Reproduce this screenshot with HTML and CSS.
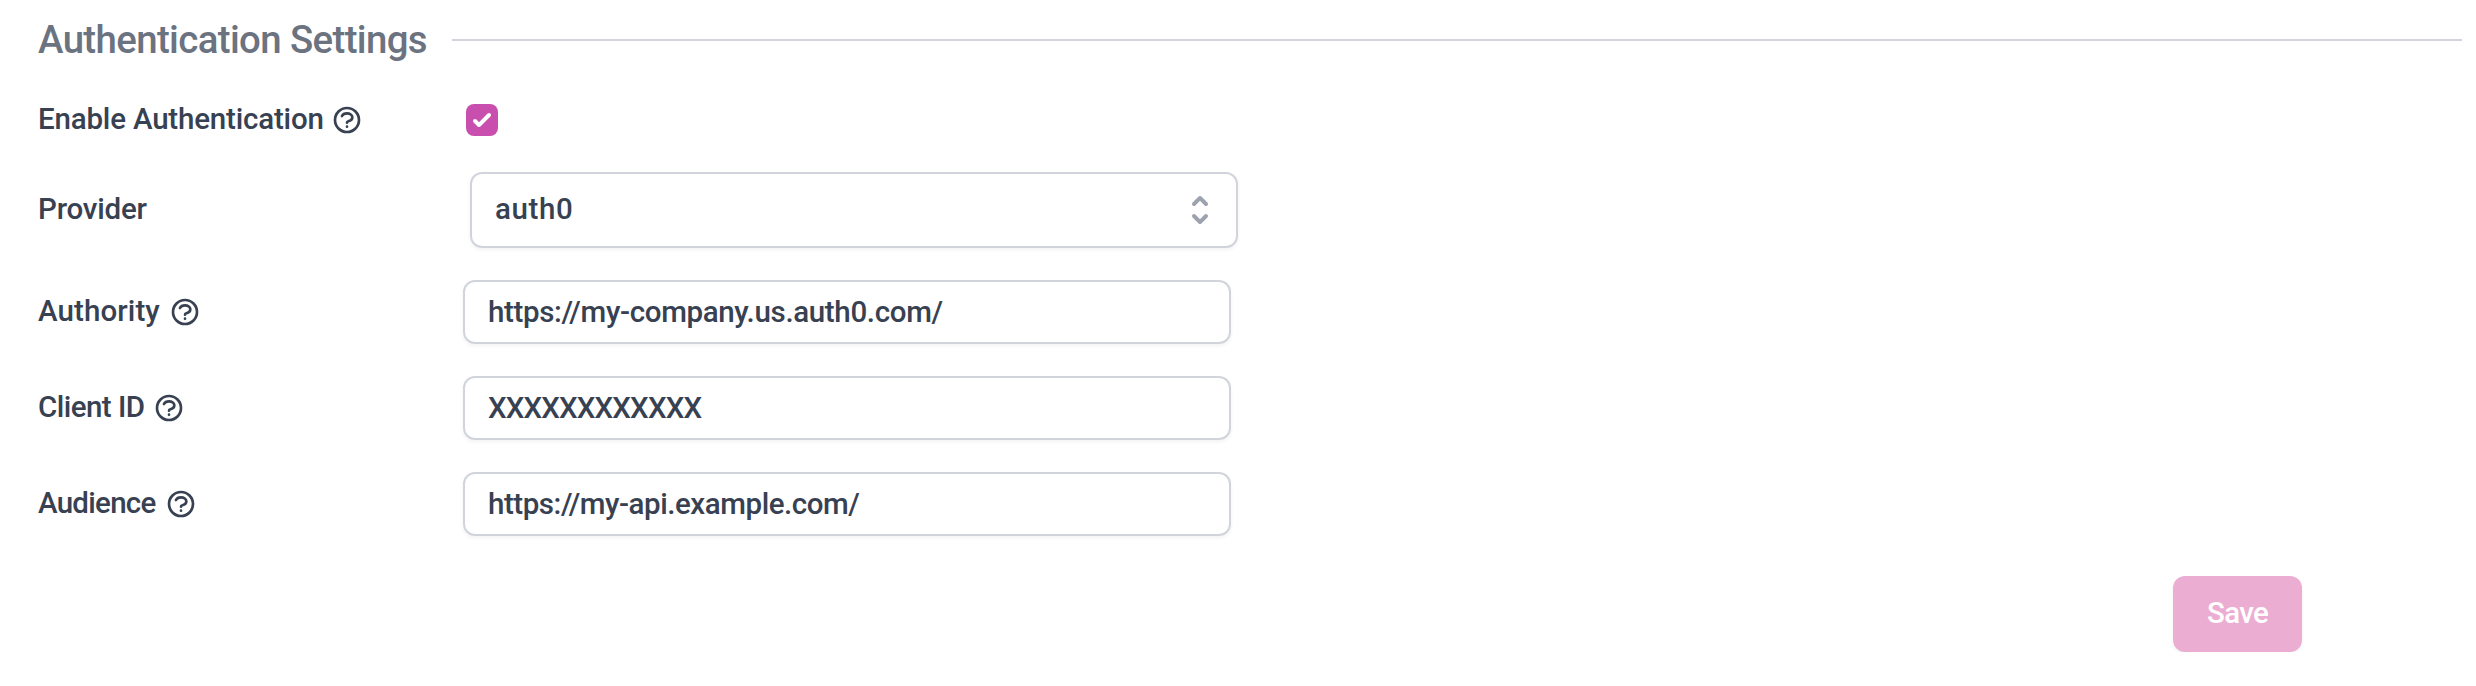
FILE: index.html
```
<!DOCTYPE html>
<html lang="en">
<head>
<meta charset="utf-8">
<title>Authentication Settings</title>
<link rel="stylesheet" href="styles.css">
</head>
<body>
<svg class="defs" aria-hidden="true">
  <symbol id="help" viewBox="0 0 24 24"><path fill="none" stroke="currentColor" stroke-width="2" stroke-linecap="round" stroke-linejoin="round" d="M8.228 9c.549-1.165 2.03-2 3.772-2 2.21 0 4 1.343 4 3 0 1.4-1.278 2.575-3.006 2.907-.542.104-.994.54-.994 1.093m0 3h.01M21 12a9 9 0 11-18 0 9 9 0 0118 0z"/></symbol>
</svg>
<form class="settings">
  <header class="heading"><h1 class="title">Authentication Settings</h1><div class="rule"></div></header>

  <div class="row row-check">
    <div class="label"><span class="text t-enable">Enable Authentication</span><svg class="help"><use href="#help"/></svg></div>
    <div class="checkbox" role="checkbox" aria-checked="true"><svg class="check" viewBox="0 0 16 16"><path fill="#fff" d="M12.207 4.793a1 1 0 010 1.414l-5 5a1 1 0 01-1.414 0l-2-2a1 1 0 011.414-1.414L6.5 9.086l4.293-4.293a1 1 0 011.414 0z"/></svg></div>
  </div>

  <div class="row row-select">
    <div class="label"><span class="text t-provider">Provider</span></div>
    <div class="field select"><span class="text t-auth0">auth0</span><svg class="selector" viewBox="0 0 20 20"><path fill="currentColor" d="M10 3a1 1 0 01.707.293l3 3a1 1 0 01-1.414 1.414L10 5.414 7.707 7.707a1 1 0 01-1.414-1.414l3-3A1 1 0 0110 3zm-3.707 9.293a1 1 0 011.414 0L10 14.586l2.293-2.293a1 1 0 011.414 1.414l-3 3a1 1 0 01-1.414 0l-3-3a1 1 0 010-1.414z"/></svg></div>
  </div>

  <div class="row">
    <div class="label"><span class="text t-authority">Authority</span><svg class="help"><use href="#help"/></svg></div>
    <div class="field input"><span class="t-company">https://my-company.us.auth0.com/</span></div>
  </div>

  <div class="row">
    <div class="label"><span class="text t-client">Client ID</span><svg class="help"><use href="#help"/></svg></div>
    <div class="field input"><span class="t-x">XXXXXXXXXXXX</span></div>
  </div>

  <div class="row">
    <div class="label"><span class="text t-audience">Audience</span><svg class="help"><use href="#help"/></svg></div>
    <div class="field input"><span class="t-api">https://my-api.example.com/</span></div>
  </div>

  <footer class="actions"><button class="save" type="button"><span class="text t-save">Save</span></button></footer>
</form>
</body>
</html>
```
FILE: styles.css
```
* { box-sizing: border-box; }
body {
  margin: 0;
  background: #fff;
  color: #374151;
  font: 500 29.5px/40px Roboto, "Liberation Sans", sans-serif;
}
.defs { position: absolute; width: 0; height: 0; }
.settings { display: flex; flex-direction: column; padding: 0 14px 0 38px; }

.heading { display: flex; align-items: center; height: 80px; margin-bottom: 24px; }
.title {
  width: 414px;
  margin: 0;
  padding-bottom: 1px;
  color: #6b7280;
  font-size: 38.4px;
  font-weight: 500;
  letter-spacing: -0.62px;
  white-space: nowrap;
}
.rule { flex: 1; height: 2px; background: #d1d5db; }

.row {
  display: grid;
  grid-template-columns: 425px 768px;
  grid-template-rows: 100%;
  align-items: center;
  height: 64px;
  margin-bottom: 32px;
}
.row-check { height: 32px; margin-bottom: 36px; }
.row-select { height: 76px; }
.label { display: flex; align-items: center; gap: 9px; white-space: nowrap; }
.text { padding-bottom: 2px; }
.help { width: 32px; height: 32px; flex: none; }

.field {
  display: flex;
  align-items: center;
  height: 64px;
  border: 2px solid #d1d5db;
  border-radius: 12px;
  background: #fff;
  box-shadow: 0 2px 4px rgba(0, 0, 0, 0.05);
  white-space: nowrap;
}
.input { padding-left: 23px; }
.select {
  justify-content: space-between;
  height: 76px;
  margin-left: 7px;
  margin-right: -7px;
  padding: 0 16px 0 23px;
}
.selector { width: 40px; height: 40px; color: #9ca3af; }

.checkbox {
  display: flex;
  width: 32px;
  height: 32px;
  margin-left: 3px;
  border-radius: 8px;
  background: #c84fae;
}
.check { width: 32px; height: 32px; }

.actions { display: flex; justify-content: flex-end; padding: 8px 160px 0 0; }
.save {
  display: flex;
  align-items: center;
  justify-content: center;
  width: 129px;
  height: 76px;
  padding: 0;
  border: 0;
  border-radius: 12px;
  background: #ecadd3;
  color: #fff;
  font: inherit;
  box-shadow: 0 2px 4px rgba(0, 0, 0, 0.05);
}

.t-enable { letter-spacing: -0.185px; margin-right: -2px; }
.t-provider { letter-spacing: -0.2px; }
.t-authority { letter-spacing: 0.1px; }
.t-client { letter-spacing: -0.54px; }
.t-audience { letter-spacing: -0.72px; }
.t-auth0 { letter-spacing: 0.6px; }
.t-company { letter-spacing: -0.34px; }
.t-x { letter-spacing: -0.86px; }
.t-api { letter-spacing: -0.44px; }
.t-save { letter-spacing: -0.7px; }
```
